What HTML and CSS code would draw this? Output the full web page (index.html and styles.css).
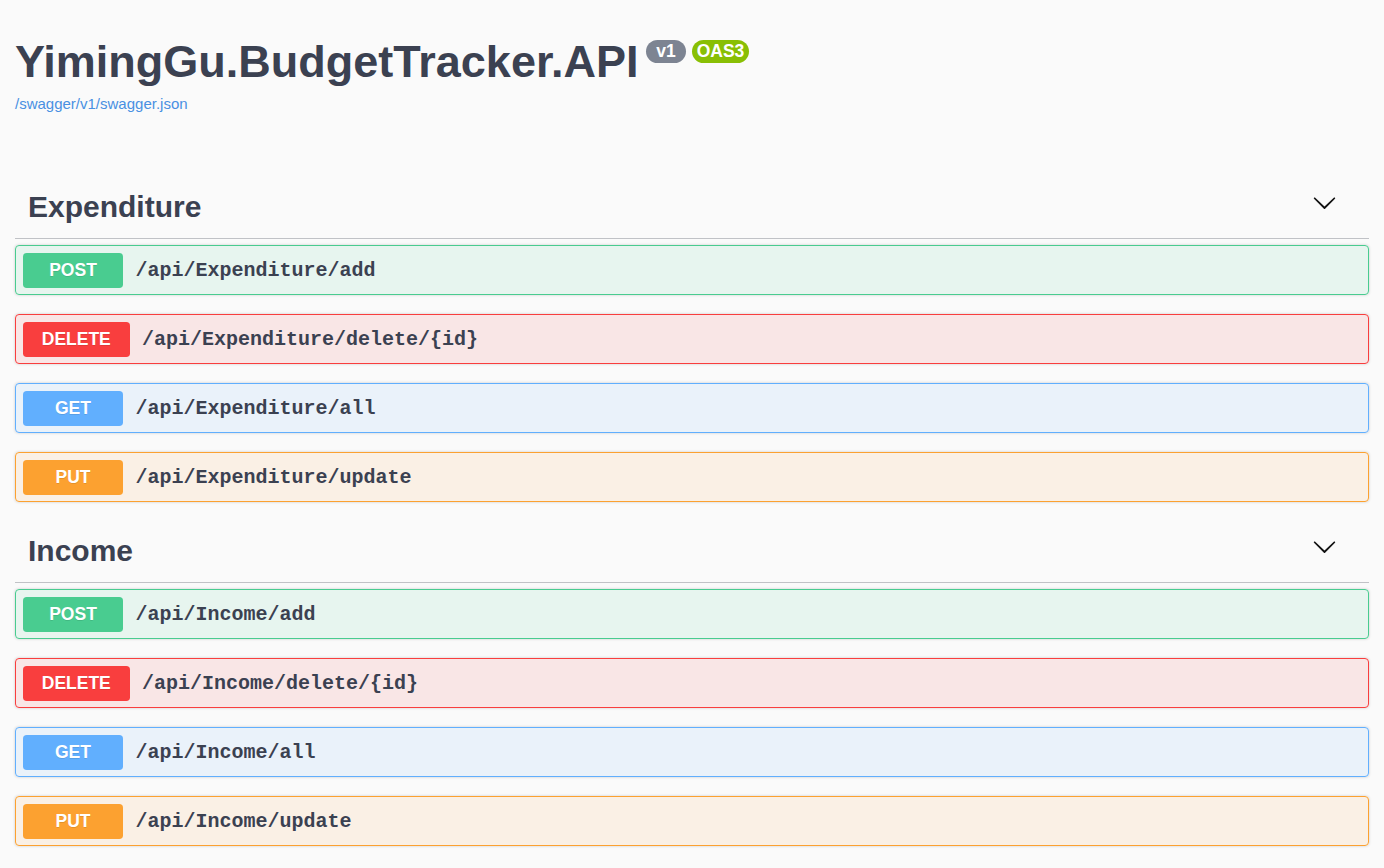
FILE: index.html
```html
<!DOCTYPE html>
<html lang="en">
<head>
<meta charset="utf-8">
<title>Swagger UI</title>
<link rel="stylesheet" href="styles.css">
</head>
<body>
<div class="wrapper">
  <div class="info">
    <h2 class="title">
      <span class="title-text">YimingGu.BudgetTracker.API</span>
      <span class="stamps">
        <small class="stamp version"><pre> v1 </pre></small>
        <small class="stamp oas"><pre>OAS3</pre></small>
      </span>
    </h2>
    <a class="link" href="#">/swagger/v1/swagger.json</a>
  </div>

  <div class="tags">
    <section class="tag-section">
      <h3 class="tag">
        <span>Expenditure</span>
        <svg class="arrow" width="25" height="25" viewBox="0 0 20 20"><path d="M17.418 6.109c.272-.268.709-.268.979 0s.271.701 0 .969l-7.908 7.83c-.27.268-.707.268-.979 0l-7.908-7.83c-.27-.268-.27-.701 0-.969.271-.268.709-.268.979 0L10 13.25l7.418-7.141z"/></svg>
      </h3>
      <div class="opblock post"><span class="method">POST</span><span class="path">/api/Expenditure/add</span></div>
      <div class="opblock delete"><span class="method">DELETE</span><span class="path">/api/Expenditure/delete/{id}</span></div>
      <div class="opblock get"><span class="method">GET</span><span class="path">/api/Expenditure/all</span></div>
      <div class="opblock put"><span class="method">PUT</span><span class="path">/api/Expenditure/update</span></div>
    </section>

    <section class="tag-section">
      <h3 class="tag">
        <span>Income</span>
        <svg class="arrow" width="25" height="25" viewBox="0 0 20 20"><path d="M17.418 6.109c.272-.268.709-.268.979 0s.271.701 0 .969l-7.908 7.83c-.27.268-.707.268-.979 0l-7.908-7.83c-.27-.268-.27-.701 0-.969.271-.268.709-.268.979 0L10 13.25l7.418-7.141z"/></svg>
      </h3>
      <div class="opblock post"><span class="method">POST</span><span class="path">/api/Income/add</span></div>
      <div class="opblock delete"><span class="method">DELETE</span><span class="path">/api/Income/delete/{id}</span></div>
      <div class="opblock get"><span class="method">GET</span><span class="path">/api/Income/all</span></div>
      <div class="opblock put"><span class="method">PUT</span><span class="path">/api/Income/update</span></div>
    </section>
  </div>
</div>
</body>
</html>
```

FILE: styles.css
```css
* { box-sizing: border-box; }

html, body {
  margin: 0;
  padding: 0;
  background: #fafafa;
}

body {
  font-family: "Liberation Sans", Arial, Helvetica, sans-serif;
  color: #3b4151;
}

.wrapper {
  padding: 0 15px;
}

.info {
  padding-top: 36px;
}

.title {
  display: flex;
  align-items: flex-start;
  margin: 0;
  font-size: 45px;
  line-height: 52px;
  font-weight: 700;
  color: #3b4151;
}

.stamps {
  display: flex;
  gap: 6px;
  margin-left: 8px;
  margin-top: 4px;
}

.stamp {
  display: inline-block;
  padding: 2px 5px;
  border-radius: 57px;
  background: #7d8492;
}

.stamp.oas {
  background: #89bf04;
}

.stamp pre {
  margin: 0;
  font-family: "Liberation Sans", Arial, sans-serif;
  font-size: 17.5px;
  line-height: 19px;
  font-weight: 700;
  color: #fff;
}

.link {
  display: inline-block;
  margin-top: 7px;
  font-size: 15px;
  line-height: 17px;
  color: #4990e2;
  text-decoration: none;
}

.tags {
  margin-top: 62px;
}

.tag-section {
  display: flex;
  flex-direction: column;
}

.tag {
  display: flex;
  align-items: center;
  justify-content: space-between;
  margin: 0 0 6px;
  padding: 12.5px 32px 12.5px 13px;
  font-size: 30px;
  line-height: 38px;
  font-weight: 700;
  color: #3b4151;
  border-bottom: 1px solid rgba(59, 65, 81, 0.3);
}

.arrow {
  display: block;
  margin-bottom: 8px;
  fill: #111;
}

.opblock {
  display: flex;
  align-items: center;
  height: 50px;
  margin-bottom: 19px;
  padding: 0 7px;
  border: 1px solid;
  border-radius: 4px;
  box-shadow: 0 0 3px rgba(0, 0, 0, 0.19);
}

.opblock:last-child {
  margin-bottom: 17px;
}

.method {
  min-width: 100px;
  height: 35px;
  padding: 0 18.75px;
  border-radius: 3.75px;
  font-size: 17.5px;
  line-height: 35px;
  font-weight: 700;
  text-align: center;
  color: #fff;
  text-shadow: 0 1px 0 rgba(0, 0, 0, 0.1);
}

.path {
  padding: 0 12.5px;
  font-family: "Liberation Mono", "Courier New", monospace;
  font-size: 20px;
  font-weight: 700;
  color: #3b4151;
}

.opblock.post { background: rgba(73, 204, 144, 0.1); border-color: #49cc90; }
.opblock.post .method { background: #49cc90; }

.opblock.delete { background: rgba(249, 62, 62, 0.1); border-color: #f93e3e; }
.opblock.delete .method { background: #f93e3e; }

.opblock.get { background: rgba(97, 175, 254, 0.1); border-color: #61affe; }
.opblock.get .method { background: #61affe; }

.opblock.put { background: rgba(252, 161, 48, 0.1); border-color: #fca130; }
.opblock.put .method { background: #fca130; }
```
